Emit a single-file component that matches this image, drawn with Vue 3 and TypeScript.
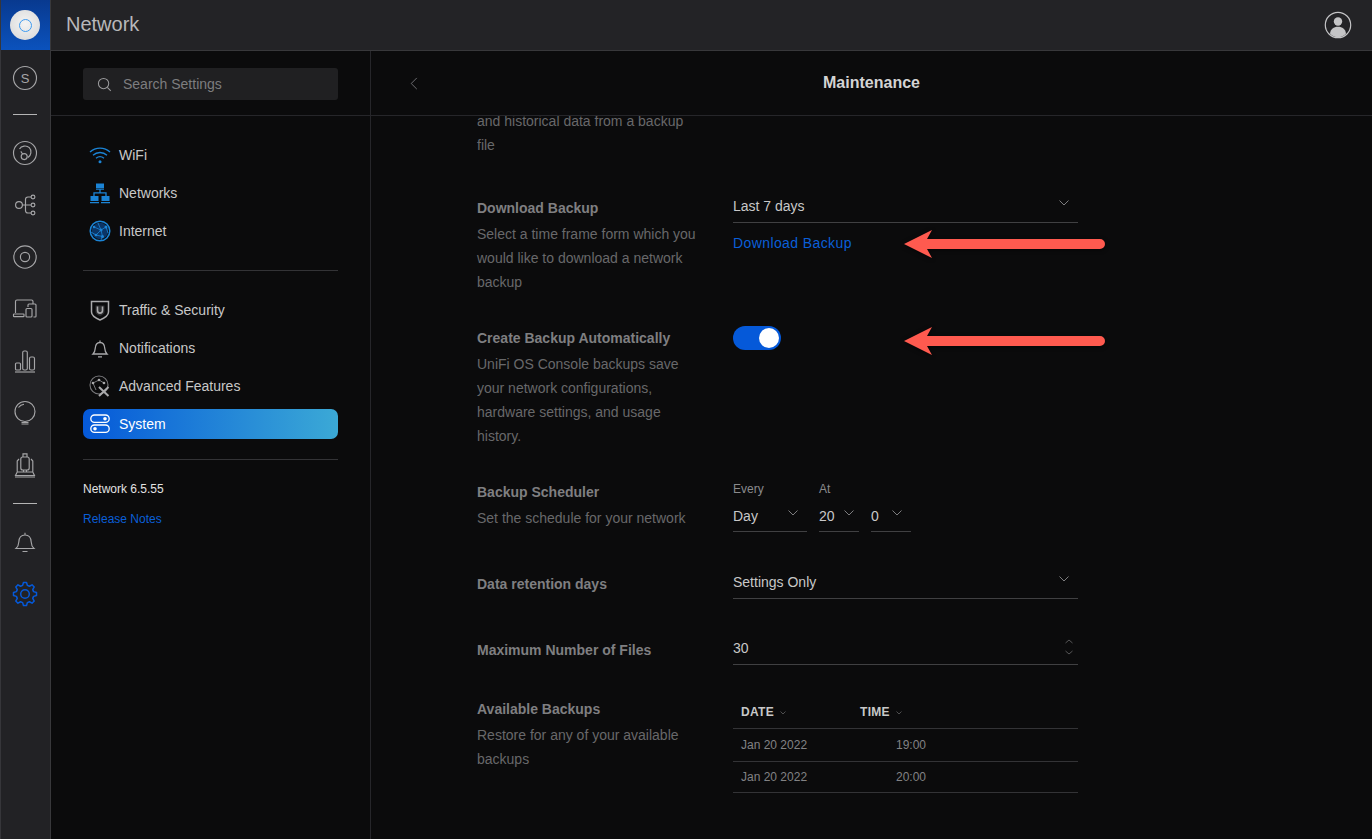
<script setup lang="ts">
const gearPath = (() => {
  const cx = 14, cy = 14, teeth = 8, ro = 11.6, ri = 8.9
  const pts: string[] = []
  for (let i = 0; i < teeth; i++) {
    const a = (i * 2 * Math.PI) / teeth - Math.PI / 2
    const s = (2 * Math.PI) / teeth
    const list: [number, number][] = [
      [ri, a - s * 0.34],
      [ro, a - s * 0.17],
      [ro, a + s * 0.17],
      [ri, a + s * 0.34],
    ]
    for (const [r, t] of list) {
      pts.push(`${(cx + r * Math.cos(t)).toFixed(2)} ${(cy + r * Math.sin(t)).toFixed(2)}`)
    }
  }
  return 'M' + pts.join('L') + 'Z'
})()
</script>

<template>
  <div class="app">
    <aside class="rail">
      <div class="logo"><span class="puck"><span class="puck-ring"></span></span></div>
      <div class="rail-item">
        <svg class="ri" viewBox="0 0 28 28"><circle cx="14" cy="14" r="11.5" /><text x="14" y="18.6" text-anchor="middle" class="s-text">S</text></svg>
      </div>
      <div class="rail-sep first"></div>
      <div class="rail-item">
        <svg class="ri" viewBox="0 0 28 28"><circle cx="14" cy="14" r="11.5" /><path d="M8.500 10c1.800-3.300 7-4 9.800-1.300 2.800 2.900 1.900 7.800-1.300 9.800" /><circle cx="13.200" cy="17.600" r="3" /><path d="M11.600 15 9.800 12.400" /></svg>
      </div>
      <div class="rail-item">
        <svg class="ri" viewBox="0 0 28 28"><circle cx="8" cy="14" r="3.400" /><circle cx="22" cy="6" r="1.900" /><circle cx="22" cy="14" r="1.900" /><circle cx="22" cy="22" r="1.900" /><path d="M11.400 14H20M14.500 14V8.500Q14.500 6 17 6H20M14.500 14v5.500q0 2.500 2.500 2.500H20" /></svg>
      </div>
      <div class="rail-item">
        <svg class="ri" viewBox="0 0 28 28"><circle cx="14" cy="14" r="11.200" /><circle cx="14" cy="14" r="4.600" /></svg>
      </div>
      <div class="rail-item">
        <svg class="ri" viewBox="0 0 28 28"><path d="M4.500 18V6.500q0-1.500 1.500-1.500h14.500q1.500 0 1.500 1.500V9" /><rect x="2.500" y="19" width="10.500" height="2.600" rx=".6" /><rect x="15" y="13.500" width="6" height="8.500" rx="1" /><path d="M17 12v-2q0-1 1-1h6q1 0 1 1v11.200q0 .8-.8.8H22.500" /></svg>
      </div>
      <div class="rail-item">
        <svg class="ri" viewBox="0 0 28 28"><rect x="4.500" y="16" width="5" height="7" rx="1" /><rect x="11.700" y="4" width="4.600" height="19" rx="1.500" /><rect x="18.500" y="10" width="5" height="13" rx="1.500" /><path d="M4 25h20" /></svg>
      </div>
      <div class="rail-item">
        <svg class="ri" viewBox="0 0 28 28"><circle cx="14" cy="12.500" r="10" /><path d="M7.500 8.500C9 6.500 11 5.500 13 5.300" /><path d="M10.500 23.500h7M10.500 25h7" /></svg>
      </div>
      <div class="rail-item">
        <svg class="ri" viewBox="0 0 28 28"><rect x="9.800" y="6" width="8.400" height="13" rx="2" /><path d="M12 6V2.800h4V6M12.500 19v2M15.500 19v2M8 8 6.200 10v10.500M20 8l1.800 2v10.500M6.200 21h15.600l1.700 3.500h-19zM4 26h20" /></svg>
      </div>
      <div class="rail-sep"></div>
      <div class="rail-item">
        <svg class="ri" viewBox="0 0 28 28"><path d="M5 20.500c1.600-1.400 2.600-2.600 2.800-6.500.2-4.300 2.700-7 6.200-7s6 2.700 6.200 7c.2 3.900 1.200 5.100 2.800 6.500zM14 7V4.800M11.500 23.500h5" /></svg>
      </div>
      <div class="rail-item">
        <svg class="ri gear" viewBox="0 0 28 28"><path :d="gearPath" /><circle cx="14" cy="14" r="4.300" /></svg>
      </div>
    </aside>

    <div class="main">
      <header class="topbar">
        <span class="brand">Network</span>
        <svg class="avatar" viewBox="0 0 28 28">
          <circle cx="14" cy="14" r="12.700" class="avatar-ring" />
          <circle cx="14" cy="10.500" r="4.200" class="avatar-fill" />
          <path d="M6 22.500c.6-4.400 3.600-6.700 8-6.700s7.400 2.300 8 6.700C20 25 17 26.300 14 26.300S8 25 6 22.500z" class="avatar-fill" />
        </svg>
      </header>

      <div class="body">
        <nav class="side">
          <div class="side-top">
            <div class="search">
              <svg class="search-icon" viewBox="0 0 16 16"><circle cx="7" cy="7" r="5.500" /><path d="m11 11 3.700 3.700" /></svg>
              <span>Search Settings</span>
            </div>
          </div>
          <div class="side-list">
            <div class="nav-group">
              <div class="nav-item">
                <svg class="ni blue" viewBox="0 0 22 22"><path d="M1 8c5.500-5.300 14.500-5.300 20 0M4 11.200c3.900-3.600 10.100-3.600 14 0M7 14.300c2.300-1.900 5.700-1.900 8 0" /><circle cx="11" cy="17.800" r="1.500" class="fill" /></svg>
                <span>WiFi</span>
              </div>
              <div class="nav-item">
                <svg class="ni blue" viewBox="0 0 22 22"><rect x="7" y="1.500" width="8" height="4.500" class="fill" /><path d="M7 7.200h8M11 7.500v3M5 14v-3.200h12V14M1 20.700h9M12 20.700h9" /><rect x="1.500" y="14" width="8" height="5" class="fill" /><rect x="12.500" y="14" width="8" height="5" class="fill" /></svg>
                <span>Networks</span>
              </div>
              <div class="nav-item">
                <svg class="ni blue" viewBox="0 0 22 22"><circle cx="11" cy="11" r="9.800" stroke-width="1.500" /><circle cx="11" cy="11" r="8.300" class="globe" /><path d="M5 7l7 3-5 5M12 10l5-3M12 10l1.500 6.500M7 15l6.500 1.500M9 3l3 7M17 7l2 6M2 12l5 3M13.500 16.500 12 20" stroke-width=".8" /><circle cx="5" cy="7" r="1.300" class="fill" /><circle cx="17" cy="7" r="1.500" class="fill" /><circle cx="12" cy="10" r="1.500" class="fill" /><circle cx="7" cy="15" r="1.300" class="fill" /><circle cx="13.500" cy="16.500" r="1.500" class="fill" /></svg>
                <span>Internet</span>
              </div>
            </div>
            <div class="nav-sep"></div>
            <div class="nav-group lower">
              <div class="nav-item">
                <svg class="ni grey" viewBox="0 0 22 22"><path d="M2.500 2.500h17V13c0 3.500-3.800 6-8.500 8-4.700-2-8.500-4.500-8.500-8z" stroke-width="1.500" /><path d="M6.500 6.500h9v6.500c0 1.700-2.200 3-4.500 4-2.300-1-4.500-2.300-4.500-4z" class="shield-in" /><path d="M8.500 7.500v4c0 1.700 1 2.600 2.500 2.600s2.500-.9 2.500-2.600v-4" stroke-width="1.600" /></svg>
                <span>Traffic &amp; Security</span>
              </div>
              <div class="nav-item">
                <svg class="ni grey" viewBox="0 0 22 22"><path d="M4 17c1.300-1.200 2-2.300 2.200-5.500C6.400 8 8.300 5.500 11 5.500s4.600 2.500 4.800 6c.2 3.200.9 4.300 2.200 5.500zM11 5.500V3.500M9 19.800h4" /></svg>
                <span>Notifications</span>
              </div>
              <div class="nav-item">
                <svg class="ni grey" viewBox="0 0 22 22"><circle cx="10" cy="10" r="9" stroke-width="1.100" class="dim" /><path d="M4 8l6-3 5 3M4 8l3 7" stroke-width="1" class="dim" /><circle cx="4" cy="8" r="1.300" class="fill" /><circle cx="10" cy="5" r="1.300" class="fill" /><circle cx="15" cy="8" r="1.300" class="fill" /><path d="M10 12l9.500 9M19.500 12 10 21" stroke-width="2" /></svg>
                <span>Advanced Features</span>
              </div>
              <div class="nav-item active">
                <svg class="ni white" viewBox="0 0 22 22"><rect x="1.800" y="2" width="18.400" height="7.400" rx="3.700" stroke-width="1.300" /><circle cx="16" cy="5.700" r="1.800" class="fill" /><rect x="1.800" y="12" width="18.400" height="7.400" rx="3.700" stroke-width="1.300" /><circle cx="6" cy="15.700" r="1.800" class="fill" /></svg>
                <span>System</span>
              </div>
            </div>
            <div class="nav-sep tail"></div>
            <div class="version">Network 6.5.55</div>
            <a class="notes">Release Notes</a>
          </div>
        </nav>

        <section class="panel">
          <div class="panel-head">
            <svg class="back" viewBox="0 0 8 14"><path d="M7 1 1 7l6 6" /></svg>
            <h1>Maintenance</h1>
          </div>
          <div class="form">
            <div class="row frag">
              <p class="desc">and historical data from a backup<br />file</p>
            </div>

            <div class="row r-download">
              <div>
                <h2>Download Backup</h2>
                <p class="desc">Select a time frame form which you would like to download a network backup</p>
              </div>
              <div>
                <div class="select first-select">
                  <span>Last 7 days</span>
                  <svg class="chev" viewBox="0 0 10 6"><path d="m.5.500 4.500 4.500L9.500.500" /></svg>
                </div>
                <a class="link">Download Backup</a>
              </div>
            </div>

            <div class="row r-auto">
              <div>
                <h2>Create Backup Automatically</h2>
                <p class="desc">UniFi OS Console backups save your network configurations, hardware settings, and usage history.</p>
              </div>
              <div><span class="toggle"><span class="thumb"></span></span></div>
            </div>

            <div class="row r-sched">
              <div>
                <h2>Backup Scheduler</h2>
                <p class="desc">Set the schedule for your network</p>
              </div>
              <div class="sched">
                <div class="sched-col w74">
                  <label>Every</label>
                  <div class="mini wide"><span>Day</span><svg class="chev" viewBox="0 0 10 6"><path d="m.5.500 4.500 4.500L9.500.500" /></svg></div>
                </div>
                <div class="sched-col w40">
                  <label>At</label>
                  <div class="mini"><span>20</span><svg class="chev" viewBox="0 0 10 6"><path d="m.5.500 4.500 4.500L9.500.500" /></svg></div>
                </div>
                <div class="sched-col w40">
                  <label>&nbsp;</label>
                  <div class="mini wide"><span>0</span><svg class="chev" viewBox="0 0 10 6"><path d="m.5.500 4.500 4.500L9.500.500" /></svg></div>
                </div>
              </div>
            </div>

            <div class="row r-retain">
              <h2>Data retention days</h2>
              <div class="select">
                <span>Settings Only</span>
                <svg class="chev" viewBox="0 0 10 6"><path d="m.5.500 4.500 4.500L9.500.500" /></svg>
              </div>
            </div>

            <div class="row r-max">
              <h2>Maximum Number of Files</h2>
              <div class="select">
                <span>30</span>
                <span class="spin">
                  <svg viewBox="0 0 8 5"><path d="m.5 4 3.500-3 3.500 3" /></svg>
                  <svg viewBox="0 0 8 5"><path d="m.5 1 3.500 3 3.500-3" /></svg>
                </span>
              </div>
            </div>

            <div class="row r-avail">
              <div>
                <h2>Available Backups</h2>
                <p class="desc">Restore for any of your available backups</p>
              </div>
              <table class="tbl">
                <thead>
                  <tr>
                    <th class="c-date">DATE <svg class="sort" viewBox="0 0 6 4"><path d="m.5.500 2.500 2.500L5.500.500" /></svg></th>
                    <th class="c-time">TIME <svg class="sort" viewBox="0 0 6 4"><path d="m.5.500 2.500 2.500L5.500.500" /></svg></th>
                    <th></th>
                  </tr>
                </thead>
                <tbody>
                  <tr class="tr-a"><td class="c-date">Jan 20 2022</td><td class="c-val">19:00</td><td></td></tr>
                  <tr class="tr-b"><td class="c-date">Jan 20 2022</td><td class="c-val">20:00</td><td></td></tr>
                </tbody>
              </table>
            </div>
          </div>

          <svg class="callout one" viewBox="0 0 204 32">
            <path d="M2 16 30 2 25 11H198a5 5 0 0 1 0 10H25L30 30z" />
          </svg>
          <svg class="callout two" viewBox="0 0 204 32">
            <path d="M2 16 30 2 25 11H198a5 5 0 0 1 0 10H25L30 30z" />
          </svg>
        </section>
      </div>
    </div>
  </div>
</template>

<style>
html, body { margin: 0; background: #0b0b0c; }
</style>

<style scoped>
* { box-sizing: border-box; }
.app {
  width: 1372px;
  height: 839px;
  display: flex;
  overflow: hidden;
  background: #0b0b0c;
  font-family: "Liberation Sans", Arial, sans-serif;
  font-size: 14px;
  color: #c8c8c8;
  border-left: 1px solid #36363a;
}
.rail {
  width: 50px;
  flex: none;
  background: #222225;
  border-right: 1px solid #38383b;
  display: flex;
  flex-direction: column;
  align-items: flex-start;
}
.logo {
  width: 49px;
  height: 50px;
  margin-bottom: 2px;
  padding-right: 1px;
  background: linear-gradient(180deg, #08398f 0%, #0b52bd 100%);
  display: flex;
  align-items: center;
  justify-content: center;
}
.puck {
  width: 30px;
  height: 30px;
  border-radius: 50%;
  background: radial-gradient(circle at 50% 45%, #f4f4f4 0%, #dcdcdc 80%, #bdbdbd 100%);
  display: flex;
  align-items: center;
  justify-content: center;
}
.puck-ring {
  width: 13px;
  height: 13px;
  border-radius: 50%;
  border: 1.500px solid #3f9bf0;
}
.rail-item {
  width: 48px;
  height: 52px;
  flex: none;
  display: flex;
  align-items: center;
  justify-content: center;
}
.ri {
  width: 28px;
  height: 28px;
  fill: none;
  stroke: #a6a6a8;
  stroke-width: 1.150;
}
.s-text {
  fill: #a6a6a8;
  stroke: none;
  font-size: 13px;
  font-family: "Liberation Sans", Arial, sans-serif;
}
.ri.gear { stroke: #0559d9; stroke-width: 1.500; stroke-linejoin: round; }
.rail-sep {
  width: 24px;
  height: 1px;
  background: #b5b5b5;
  flex: none;
  margin: 12px 0 12px 12px;
}
.rail-sep.first { margin-top: 10px; }

.main { flex: 1; display: flex; flex-direction: column; min-width: 0; }
.topbar {
  height: 51px;
  flex: none;
  background: #232326;
  border-bottom: 1px solid #38383b;
  display: flex;
  align-items: center;
  justify-content: space-between;
  padding: 0 20px 1px 15px;
}
.brand { font-size: 20px; color: #b8b8ba; }
.avatar { width: 28px; height: 28px; }
.avatar-ring { fill: none; stroke: #c4c4c6; stroke-width: 1.200; }
.avatar-fill { fill: #c4c4c6; }

.body { flex: 1; display: flex; min-height: 0; }
.side {
  width: 320px;
  flex: none;
  border-right: 1px solid #26262a;
  display: flex;
  flex-direction: column;
}
.side-top {
  height: 65px;
  flex: none;
  padding: 17px 32px 0;
  border-bottom: 1px solid #26262a;
}
.search {
  width: 255px;
  height: 32px;
  border-radius: 3px;
  background: #202022;
  display: flex;
  align-items: center;
  gap: 11px;
  padding-left: 14px;
  color: #7d7d7f;
}
.search-icon { width: 15px; height: 15px; fill: none; stroke: #9a9a9c; stroke-width: 1.100; }
.side-list { padding: 20px 32px 0; }
.nav-group { display: flex; flex-direction: column; }
.nav-item {
  width: 255px;
  height: 38px;
  display: flex;
  align-items: center;
  gap: 8px;
  padding-left: 6px;
  color: #c8c8c8;
}
.nav-item.active {
  height: 30px;
  margin-top: 4px;
  border-radius: 7px;
  background: linear-gradient(90deg, #0559d9 0%, #3ba9d6 100%);
  color: #fff;
}
.ni { width: 22px; height: 22px; flex: none; fill: none; stroke-width: 1.300; }
.ni.blue { stroke: #1b84d6; }
.ni.blue .fill { fill: #1b84d6; stroke: none; }
.ni.blue .globe { fill: #0b3566; stroke: none; }
.ni.grey { stroke: #a9a9ab; }
.ni.grey .fill { fill: #a9a9ab; stroke: none; }
.ni.grey .dim { stroke: #77777a; }
.ni.grey .shield-in { fill: #2e2e30; stroke: none; }
.ni.white { stroke: #fff; }
.ni.white .fill { fill: #fff; stroke: none; }
.nav-sep { width: 255px; height: 1px; background: #333336; margin: 20px 0; }
.version { font-size: 12px; color: #e2e2e2; line-height: 18px; }
.notes { display: block; margin-top: 12px; font-size: 12px; line-height: 18px; color: #0a5fd8; }

.panel { flex: 1; position: relative; min-width: 0; display: flex; flex-direction: column; }
.panel-head {
  height: 65px;
  flex: none;
  position: relative;
  display: flex;
  align-items: center;
  justify-content: center;
  border-bottom: 1px solid #26262a;
}
.panel-head h1 { margin: 0; font-size: 16px; font-weight: 700; color: #d4d4d4; }
.back {
  position: absolute;
  left: 39px;
  top: 26px;
  width: 8px;
  height: 13px;
  fill: none;
  stroke: #77777a;
  stroke-width: 1;
}
.form { padding-left: 106px; }
.row {
  display: grid;
  grid-template-columns: 256px 345px;
  align-items: start;
}
.frag { margin-top: -7px; margin-bottom: 39px; }
.r-auto { margin-top: 32px; }
.r-sched { margin-top: 32px; }
.r-retain { margin-top: 40px; }
.r-max { margin-top: 39px; }
.r-avail { margin-top: 32px; }
h2 {
  margin: 0;
  font-size: 14px;
  line-height: 24px;
  font-weight: 700;
  color: #7f7f81;
}
.desc {
  margin: 2px 0 0;
  width: 225px;
  font-size: 14px;
  line-height: 24px;
  color: #68686a;
}
.frag .desc { margin: 0; }
.select {
  height: 27px;
  display: flex;
  align-items: center;
  justify-content: space-between;
  padding-right: 9px;
  border-bottom: 1px solid #404042;
  padding-bottom: 6px;
  color: #c8c8c8;
}
.first-select { margin-top: -5px; margin-bottom: 8px; height: 32px; padding-bottom: 1px; }
.chev { width: 10px; height: 6px; fill: none; stroke: #8a8a8c; stroke-width: .9; position: relative; top: -3px; }
.link { color: #0a5fd8; line-height: 24px; display: block; letter-spacing: .4px; }
.toggle {
  display: flex;
  width: 48px;
  height: 24px;
  border-radius: 12px;
  background: #0559d9;
  align-items: center;
  justify-content: flex-end;
  padding-right: 2px;
}
.thumb { width: 20px; height: 20px; border-radius: 50%; background: #fff; }
.sched { display: flex; gap: 12px; margin-top: 0; }
.sched-col label { display: block; font-size: 12px; line-height: 18px; color: #8a8a8c; margin-bottom: 5px; }
.w74 { width: 74px; }
.w40 { width: 40px; }
.mini {
  height: 29px;
  display: flex;
  align-items: center;
  justify-content: space-between;
  padding-bottom: 2px;
  padding-right: 5px;
  border-bottom: 1px solid #404042;
  color: #c8c8c8;
}
.mini.wide { padding-right: 9px; }
.spin { display: flex; flex-direction: column; gap: 6px; margin-right: -4px; position: relative; top: -1px; }
.spin svg { width: 8px; height: 5px; fill: none; stroke: #6a6a6c; stroke-width: .8; display: block; }
.tbl { width: 345px; border-collapse: collapse; margin-top: -1px; table-layout: fixed; }
.tbl th, .tbl td { padding: 0; border-bottom: 1px solid #333336; }
.tbl th { height: 32px; text-align: left; font-size: 12px; font-weight: 700; color: #c8c8c8; letter-spacing: .3px; }
.tbl td { font-size: 12px; color: #828284; }
.tr-a td { height: 33px; }
.tr-b td { height: 31px; }
.c-date { width: 127px; padding-left: 8px !important; }
.c-time { width: 66px; }
.c-val { width: 66px; text-align: right; }
.sort { width: 6px; height: 4px; fill: none; stroke: #5f5f61; stroke-width: .8; margin-left: 2px; vertical-align: middle; }
.callout {
  position: absolute;
  width: 204px;
  height: 32px;
  fill: #ff5a4f;
  filter: drop-shadow(0 1px 2px rgba(0, 0, 0, .6));
}
.callout.one { left: 531px; top: 177px; }
.callout.two { left: 531px; top: 274px; }
</style>
